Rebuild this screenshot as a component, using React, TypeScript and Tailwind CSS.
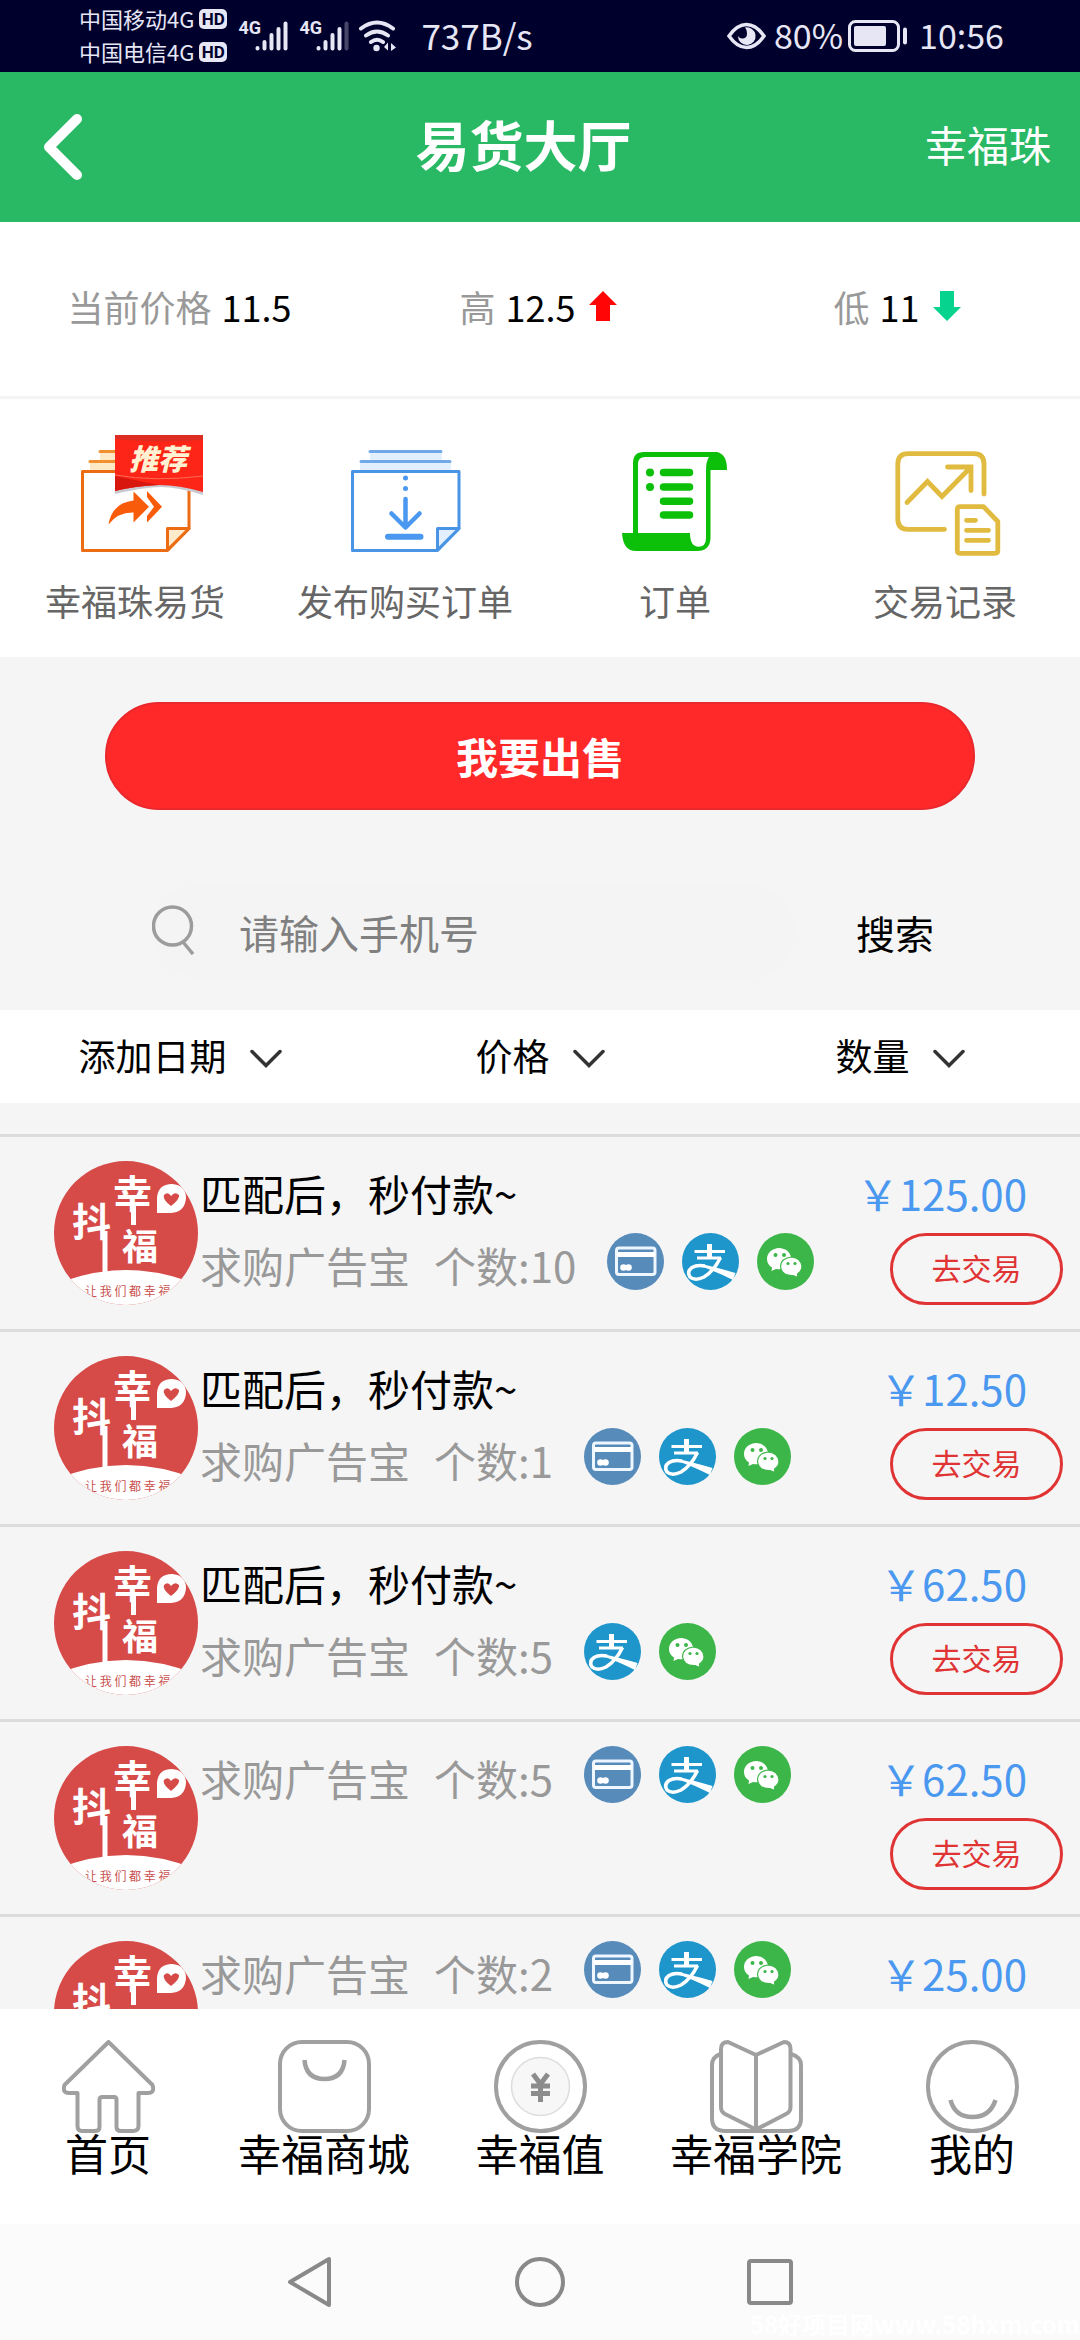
import React, { useState } from 'react';

type Pay = 'card' | 'alipay' | 'wechat';

interface Order {
  id: number;
  note?: string;
  count: number;
  price: string;
  pays: Pay[];
}

const orders: Order[] = [
  { id: 1, note: '匹配后，秒付款~', count: 10, price: '125.00', pays: ['card', 'alipay', 'wechat'] },
  { id: 2, note: '匹配后，秒付款~', count: 1, price: '12.50', pays: ['card', 'alipay', 'wechat'] },
  { id: 3, note: '匹配后，秒付款~', count: 5, price: '62.50', pays: ['alipay', 'wechat'] },
  { id: 4, count: 5, price: '62.50', pays: ['card', 'alipay', 'wechat'] },
  { id: 5, count: 2, price: '25.00', pays: ['card', 'alipay', 'wechat'] },
];

function Signal({ weak = false }: { weak?: boolean }) {
  return (
    <div className="flex items-start">
      <span className="w-[17px] font-['Liberation_Sans_Narrow','Roboto'] text-[18px] leading-[16px] font-bold">4G</span>
      <svg width="33" height="32" viewBox="0 0 33 32" stroke="#e6e6f5" strokeWidth="4" strokeLinecap="round">
        <path d="M2.500 28v.5M9.500 22v6.500M16.500 15v13.500M23.500 9v19.500" />
        <path d="M30.500 3.500v25" opacity={weak ? 0.3 : 1} />
      </svg>
    </div>
  );
}

function StatusBar() {
  return (
    <div className="flex h-[72px] shrink-0 items-center justify-between bg-[#00002d] pr-[76px] pl-[79px] text-[#e6e6f5]">
      <div className="flex items-center">
        <div className="flex flex-col pb-[2px] text-[22px] leading-[33px]">
          {['中国移动4G', '中国电信4G'].map((name) => (
            <div key={name} className="flex items-center gap-[5px]">
              {name}
              <span className="flex h-[20px] w-[28px] items-center justify-center rounded-[5px] bg-[#e6e6f5] font-['Roboto'] text-[17px] leading-[20px] font-bold text-[#00002d]">
                HD
              </span>
            </div>
          ))}
        </div>
        <div className="ml-[11px] flex gap-[11px]">
          <Signal />
          <Signal weak />
        </div>
        <svg className="ml-[9px]" width="40" height="32" viewBox="0 0 40 32" fill="none" stroke="#e6e6f5" strokeWidth="4" strokeLinecap="round">
          <path d="M3 8.500Q19 -3.500 35 8.500M8 15.500q11-8 22 0M13 22q6-4.500 12 0" />
          <circle cx="18.500" cy="28" r="3.200" fill="#e6e6f5" stroke="none" />
          <path d="M30 22.500v8l-4-3.500zM33 31v-8l5 4.500z" fill="#e6e6f5" stroke="none" />
        </svg>
        <span className="ml-[23px] pb-[2px] text-[35px] leading-[40px]">737B/s</span>
      </div>
      <div className="flex items-center">
        <svg width="39" height="28" viewBox="0 0 39 28" fill="none">
          <path d="M2 14Q10 2.500 19.500 2.500T37 14Q29 25.500 19.500 25.500T2 14z" stroke="#e6e6f5" strokeWidth="3.500" />
          <path d="M18 5.500a8.800 8.800 0 1 1-7 8.500q2 3 5 2.500q4-.5 4-5q0-4-2-6z" fill="#e6e6f5" />
        </svg>
        <span className="ml-[8px] pb-[2px] text-[34px] leading-[40px]">80%</span>
        <svg className="ml-[4px]" width="62" height="34" viewBox="0 0 62 34" fill="none">
          <rect x="2.500" y="2.500" width="49" height="29" rx="6" stroke="#e6e6f5" strokeWidth="3" />
          <rect x="7" y="7" width="32" height="20" rx="2" fill="#e6e6f5" />
          <path d="M58 10.500v13" stroke="#e6e6f5" strokeWidth="4" strokeLinecap="round" />
        </svg>
        <span className="ml-[10px] pb-[2px] text-[34px] leading-[40px]">10:56</span>
      </div>
    </div>
  );
}

function RecommendIcon() {
  return (
    <div className="relative">
      <svg width="120" height="120" viewBox="0 0 120 120" fill="none">
        <path d="M25 11h72v9H25zM15 21h91v9H15z" fill="#fde9c6" />
        <path d="M25 10.500h72M15 20.500h91" stroke="#f0902f" strokeWidth="3" strokeLinecap="round" />
        <path d="M92.500 109.500H7.500v-79h106.500v57z" fill="#fff" stroke="#ec6c14" strokeWidth="3" strokeLinejoin="round" />
        <path d="M92.500 109V87.500H114z" fill="#fdebcc" stroke="#ec6c14" strokeWidth="3" strokeLinejoin="round" />
        <path d="M33.500 83.500Q37 62 58.500 59.500V50.500L74 65.800L58.500 81.500V71.500Q43 71 33.500 83.500zM72 50l15 15.800L72 81.500V75l7-9.200L72 56z" fill="#f85c0a" />
      </svg>
      <div className="absolute -top-[6px] left-[40px]">
        <svg width="88" height="60" viewBox="0 0 88 60">
          <path d="M0 57V40L88 46v14Q62 52 46 52T0 59z" fill="#c9c9d2" />
          <path d="M0 0h88v57Q64 50 44 50Q20 51 0 56z" fill="#fd2517" />
          <path d="M0 0h88v5Q40 8 0 4z" fill="#dd2c22" />
          <path d="M0 41L44 50Q20 51 0 56z" fill="#d8170f" />
          <path d="M0 40Q40 47 88 41" stroke="#ff6a55" strokeWidth="1" fill="none" />
        </svg>
        <span className="absolute top-[7px] left-[14px] text-[29px] leading-[30px] font-black whitespace-nowrap text-[#fff1d2] italic">推荐</span>
      </div>
    </div>
  );
}

function PublishIcon() {
  return (
    <svg width="120" height="120" viewBox="0 0 120 120" fill="none">
      <path d="M25 11h72v9H25zM15 21h91v9H15z" fill="#e2effc" />
      <path d="M25 10.500h71M16 20.500h89" stroke="#71a9e8" strokeWidth="3" strokeLinecap="round" />
      <path d="M92.500 109.500H7.500v-79h106.500v57z" stroke="#4a94e6" strokeWidth="3" strokeLinejoin="round" />
      <path d="M92.500 109V87.500H114z" fill="#e2effc" stroke="#4a94e6" strokeWidth="3" strokeLinejoin="round" />
      <circle cx="60.500" cy="37" r="2.500" fill="#4a98f0" />
      <circle cx="60.500" cy="47.500" r="2.500" fill="#4a98f0" />
      <path d="M60.500 58v28M46.500 72.500L60.500 86.500L74.500 72.500" stroke="#4a98f0" strokeWidth="4.500" strokeLinecap="round" strokeLinejoin="round" />
      <path d="M43 95.700h32.500" stroke="#4a98f0" strokeWidth="6" strokeLinecap="round" />
    </svg>
  );
}

function OrderIcon() {
  return (
    <svg width="120" height="120" viewBox="0 0 120 120" fill="#0cbf08">
      <path
        fillRule="evenodd"
        d="M7 92H18V22Q18 11 29 11H102Q112 13 112 29H95.500V97Q95 110 82 110H21Q8 110 7 92zM23 92H75Q75 105.700 83.500 105.700Q91 105.700 91 97V30Q91 20 94 16H30Q23 16 23 23z"
      />
      <circle cx="35" cy="31.500" r="4" />
      <circle cx="35" cy="46" r="4" />
      <path d="M48.500 31.500h26M48.500 46h26M48.500 60.300h26M48.500 74h26" stroke="#0cbf08" strokeWidth="7.500" strokeLinecap="round" />
    </svg>
  );
}

function RecordIcon() {
  return (
    <svg width="120" height="120" viewBox="0 0 120 120" fill="none" stroke="#e1bb3f" strokeWidth="4.800" strokeLinecap="round" strokeLinejoin="round">
      <path d="M59.500 88.300H23Q12.800 88.300 12.800 78V23Q12.800 12.700 23 12.700H89Q99 12.700 99 23V53" />
      <path d="M22 61.500L42.500 40.500L57 55.500L85.500 26.500M62.500 26h23.500v23.500" strokeLinejoin="miter" />
      <path d="M98.500 65.700H75Q72.300 65.700 72.300 68.500V109.500Q72.300 112.300 75 112.300H110Q112.800 112.300 112.800 109.500V80.500z" />
      <path d="M81.500 79.300h9M81.500 89.300h22M81.500 99.300h22" />
    </svg>
  );
}

const shortcuts = [
  { label: '幸福珠易货', Icon: RecommendIcon },
  { label: '发布购买订单', Icon: PublishIcon },
  { label: '订单', Icon: OrderIcon },
  { label: '交易记录', Icon: RecordIcon },
];

function Avatar() {
  return (
    <svg className="shrink-0" width="144" height="144" viewBox="0 0 144 144">
      <clipPath id="avatarClip">
        <circle cx="72" cy="72" r="72" />
      </clipPath>
      <g clipPath="url(#avatarClip)">
        <rect width="144" height="144" fill="#d64a48" />
        <path d="M0 124Q72 94 144 124V144H0z" fill="#fff" />
        <g fill="#fff" fontWeight="700">
          <text x="59" y="47" fontSize="39">幸</text>
          <text x="18" y="75" fontSize="39">抖</text>
          <text x="68" y="99" fontSize="36">福</text>
        </g>
        <path d="M48.500 70h5v44h-5zM77 44h5v20h-5z" fill="#fff" />
        <path d="M103 52V37Q104 23 118 23Q132 24 132 37Q131 51 117 52z" fill="#fff" />
        <path d="M117 45Q108 38 110 34Q114 30 117 35Q121 30 125 34Q126 38 117 45z" fill="#d64a48" />
        <text x="31" y="135" fontSize="12" fill="#c8504e">让 我 们 都 幸 福</text>
      </g>
    </svg>
  );
}

function PayIcon({ type }: { type: Pay }) {
  if (type === 'card') {
    return (
      <svg width="57" height="57" viewBox="0 0 57 57" fill="none">
        <circle cx="28.500" cy="28.500" r="28.500" fill="#568bba" />
        <rect x="9.500" y="15" width="38.500" height="26.500" rx="2.500" stroke="#eef6ff" strokeWidth="3" />
        <path d="M10 21.500h38" stroke="#fff" strokeWidth="5" />
        <circle cx="16.500" cy="34.500" r="3.300" fill="#fff" />
        <circle cx="21.500" cy="34.500" r="3.300" fill="#fff" />
      </svg>
    );
  }
  if (type === 'alipay') {
    return (
      <svg width="57" height="57" viewBox="0 0 57 57" fill="none" stroke="#fff">
        <circle cx="28.500" cy="28.500" r="28.500" fill="#1f96cb" stroke="none" />
        <path d="M27.500 11v13" strokeWidth="5" />
        <path d="M12.500 18.500h30.500M15 25h24" strokeWidth="2.800" />
        <path d="M38.500 24.500Q32 38 22 44Q13 48.500 8 44Q4.500 38.500 10 34.500Q15 31.500 23 33" strokeWidth="3.500" />
        <path d="M21 31.500Q33 34 53.500 40L51 47Q35 39 21 34z" fill="#fff" stroke="none" />
      </svg>
    );
  }
  return (
    <svg width="57" height="57" viewBox="0 0 57 57">
      <circle cx="28.500" cy="28.500" r="28.500" fill="#3db649" />
      <path d="M22.500 15C15 15 10 20 10 26C10 30 12 32.500 15 34.500L14.500 38L19 36Q31 38 34.500 28Q34 16 22.500 15z" fill="#fff" />
      <path d="M34.500 24Q24 25 23.500 33.500Q24.500 43 36 42.500L41 44.500L40.500 41Q45 38 45 33.500Q44 25 34.500 24z" fill="#fff" stroke="#3db649" strokeWidth="1.200" />
      <g fill="#3db649">
        <circle cx="18.500" cy="22" r="2" />
        <circle cx="27" cy="22" r="2" />
        <circle cx="31" cy="30.500" r="1.600" />
        <circle cx="38" cy="30.500" r="1.600" />
      </g>
    </svg>
  );
}

function OrderRow({ order }: { order: Order }) {
  return (
    <li className="flex border-t-[3px] border-[#dcdcdc] py-6 pr-[17px] pl-[54px] text-[42px] leading-[64px]">
      <Avatar />
      <div className="ml-[2px] flex grow flex-col gap-[8px]">
        {order.note && <div className="text-black">{order.note}</div>}
        <div className="flex text-[#999]">
          <span>求购广告宝</span>
          <span className="ml-[24px]">个数:{order.count}</span>
          <div className="ml-[31px] flex gap-[18px]">
            {order.pays.map((p) => (
              <PayIcon key={p} type={p} />
            ))}
          </div>
        </div>
      </div>
      <div className="flex flex-col items-end gap-[8px]">
        <div className="pr-[36px] text-[#4a98f0]">￥{order.price}</div>
        <button className="h-[72px] w-[173px] cursor-pointer rounded-full border-[3px] border-[#e03333] pb-[4px] text-[30px] leading-[60px] text-[#e03333]">
          去交易
        </button>
      </div>
    </li>
  );
}

const tabs = [
  {
    label: '首页',
    icon: (
      <path d="M46.500 2L90.500 45Q93 53 86 53H76.500V86Q76.500 91 71 91H59Q54.500 91 54.500 87V60Q54.500 57 52 57H40.500Q37.500 57 37.500 60V87Q37.500 91 33 91H20Q15.500 91 15.500 86V53H7Q0 53 2.500 45z" />
    ),
  },
  {
    label: '幸福商城',
    icon: (
      <>
        <rect x="2" y="2" width="89" height="89" rx="22" />
        <path d="M26.500 20Q28 39 46.500 39T66.500 20" strokeWidth="4.500" />
      </>
    ),
  },
  {
    label: '幸福值',
    icon: (
      <>
        <circle cx="46.500" cy="46.500" r="44.500" />
        <circle cx="46.500" cy="46.500" r="29" fill="#f7f7f7" stroke="#ddd" strokeWidth="1.500" />
        <path d="M39 34l7.500 10l7.500-10M46.500 44v18M37 46h19M37 53.500h19" stroke="#8c8c8c" strokeWidth="5" />
      </>
    ),
  },
  {
    label: '幸福学院',
    icon: (
      <>
        <path d="M10.500 14Q2 17 2 25V78Q2 91 15 91H78Q91 91 91 78V25Q91 17 81 14" />
        <path d="M46 15L18 2Q11 2 11 9V67Q11 72 15 74L46 89.500L76 74Q80.500 72 80.500 67V9Q80.500 2 74 2L46 15V89" />
      </>
    ),
  },
  {
    label: '我的',
    icon: (
      <>
        <circle cx="46.500" cy="46.500" r="44.500" />
        <path d="M24.500 60Q29 77 46.500 77T69.500 60" strokeWidth="4.500" />
      </>
    ),
  },
];

function App() {
  const [phone, setPhone] = useState('');

  return (
    <div className="flex h-screen flex-col overflow-hidden bg-[#f5f5f5] font-['Noto_Sans_CJK_SC',sans-serif]">
      <StatusBar />

      {/* Header */}
      <header className="flex h-[150px] shrink-0 items-center bg-[#29b964] pr-[29px] pl-[42px] text-white">
        <button aria-label="返回" className="w-[80px] cursor-pointer">
          <svg width="42" height="70" viewBox="0 0 42 70" fill="none" stroke="#fff" strokeWidth="10" strokeLinecap="round" strokeLinejoin="round">
            <path d="M35 7L7 35l28 28" />
          </svg>
        </button>
        <h1 className="grow pb-[6px] text-center text-[54px] leading-[60px] font-bold">易货大厅</h1>
        <a href="#beads" className="pb-[6px] text-[42px] leading-[60px]">幸福珠</a>
      </header>

      {/* Current / high / low price */}
      <section className="grid h-[177px] shrink-0 grid-cols-3 items-center border-b-[3px] border-[#f4f4f4] bg-white pr-[3px] pb-[6px] text-[36px] leading-[40px]">
        <div className="flex justify-center gap-[10px]">
          <span className="text-[#999]">当前价格</span>
          <span>11.5</span>
        </div>
        <div className="flex items-center justify-center gap-[10px]">
          <span className="text-[#999]">高</span>
          <span>12.5</span>
          <svg className="ml-[4px]" width="28" height="30" viewBox="0 0 28 30" fill="#ff0505">
            <path d="M14 0L28 14H21V30H7V14H0z" />
          </svg>
        </div>
        <div className="flex items-center justify-center gap-[10px]">
          <span className="text-[#999]">低</span>
          <span>11</span>
          <svg className="ml-[4px]" width="28" height="30" viewBox="0 0 28 30" fill="#05d38e">
            <path d="M14 30L0 16H7V0H21V16H28z" />
          </svg>
        </div>
      </section>

      <nav className="grid h-[258px] shrink-0 grid-cols-4 bg-white pt-[42px] text-[36px] leading-[40px] text-[#666]">
        {shortcuts.map(({ label, Icon }) => (
          <a key={label} href={`#${label}`} className="flex flex-col items-center gap-[19px] whitespace-nowrap">
            <Icon />
            {label}
          </a>
        ))}
      </nav>

      <div className="shrink-0 px-[105px] pt-[45px]">
        <button className="h-[108px] w-full cursor-pointer rounded-full border-2 border-[#e8282b] bg-[#ff292a] text-[42px] leading-[60px] font-bold text-white">
          我要出售
        </button>
      </div>

      {/* Search */}
      <form className="mt-[75px] mb-[32px] flex h-[93px] shrink-0 items-center gap-[20px] pr-[105px] pl-[152px]" onSubmit={(e) => e.preventDefault()}>
        <label className="flex h-full grow items-center rounded-full bg-[#f4f4f4]">
          <svg className="-mt-[4px] shrink-0" width="44" height="50" viewBox="0 0 44 50" fill="none" stroke="#9c9c9c" strokeWidth="3.500">
            <circle cx="20.500" cy="21" r="19" />
            <path d="M31 37L41 49" />
          </svg>
          <input
            type="tel"
            aria-label="手机号"
            placeholder="请输入手机号"
            value={phone}
            onChange={(e) => setPhone(e.target.value)}
            className="ml-[43px] w-0 grow bg-transparent text-[40px] leading-[60px] outline-none placeholder:text-[#808080]"
          />
        </label>
        <button type="submit" className="h-full w-[160px] cursor-pointer text-[39px] leading-[60px]">搜索</button>
      </form>

      {/* Sort bar */}
      <div className="grid h-[93px] shrink-0 grid-cols-3 bg-white text-[37px] leading-[40px]">
        {['添加日期', '价格', '数量'].map((name) => (
          <button key={name} className="flex cursor-pointer items-center justify-center gap-[23px] pb-[4px]">
            {name}
            <svg className="mt-[8px]" width="32" height="19" viewBox="0 0 32 19" fill="none" stroke="#333" strokeWidth="3.500" strokeLinecap="round">
              <path d="M2 2.500L16 16.500L30 2.500" />
            </svg>
          </button>
        ))}
      </div>

      <ul className="min-h-0 grow overflow-hidden pt-[31px]">
        {orders.map((o) => (
          <OrderRow key={o.id} order={o} />
        ))}
      </ul>

      {/* Bottom tabs */}
      <nav className="grid h-[215px] shrink-0 grid-cols-5 bg-white pt-[31px] text-[43px] leading-[38px] text-black">
        {tabs.map((t) => (
          <a key={t.label} href={`#${t.label}`} className="flex flex-col items-center whitespace-nowrap">
            <svg className="shrink-0" width="93" height="93" viewBox="0 0 93 93" fill="none" stroke="#a0a0a0" strokeWidth="4" strokeLinejoin="round">
              {t.icon}
            </svg>
            {t.label}
          </a>
        ))}
      </nav>

      <div className="relative flex h-[116px] shrink-0 items-center justify-center gap-[180px] bg-[#fbfbfb]">
        <button aria-label="后退" className="cursor-pointer">
          <svg width="50" height="52" viewBox="0 0 50 52" fill="none" stroke="#898989" strokeWidth="4" strokeLinejoin="round">
            <path d="M44 3v46L5 26z" />
          </svg>
        </button>
        <button aria-label="主屏幕" className="cursor-pointer">
          <svg width="50" height="50" viewBox="0 0 50 50" fill="none" stroke="#898989" strokeWidth="4">
            <circle cx="25" cy="25" r="23" />
          </svg>
        </button>
        <button aria-label="最近任务" className="cursor-pointer">
          <svg width="50" height="50" viewBox="0 0 50 50" fill="none" stroke="#898989" strokeWidth="4">
            <rect x="4" y="4" width="42" height="42" rx="2" />
          </svg>
        </button>
        <span className="absolute right-0 bottom-0 text-[24px] leading-[32px] font-bold text-white">58好项目网www.58hxm.com</span>
      </div>
    </div>
  );
}

export default App;
